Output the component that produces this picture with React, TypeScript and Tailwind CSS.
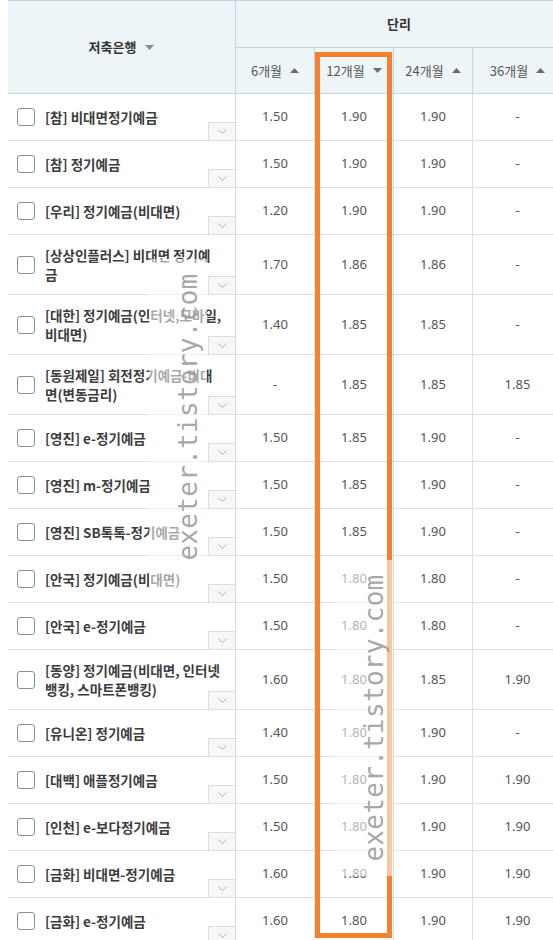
import React from "react";

type Row = {
  name: string[];
  rates: string[];
};

const rows: Row[] = [
  { name: ["[참] 비대면정기예금"], rates: ["1.50", "1.90", "1.90", "-"] },
  { name: ["[참] 정기예금"], rates: ["1.50", "1.90", "1.90", "-"] },
  { name: ["[우리] 정기예금(비대면)"], rates: ["1.20", "1.90", "1.90", "-"] },
  { name: ["[상상인플러스] 비대면 정기예", "금"], rates: ["1.70", "1.86", "1.86", "-"] },
  { name: ["[대한] 정기예금(인터넷,모바일,", "비대면)"], rates: ["1.40", "1.85", "1.85", "-"] },
  { name: ["[동원제일] 회전정기예금-비대", "면(변동금리)"], rates: ["-", "1.85", "1.85", "1.85"] },
  { name: ["[영진] e-정기예금"], rates: ["1.50", "1.85", "1.90", "-"] },
  { name: ["[영진] m-정기예금"], rates: ["1.50", "1.85", "1.90", "-"] },
  { name: ["[영진] SB톡톡-정기예금"], rates: ["1.50", "1.85", "1.90", "-"] },
  { name: ["[안국] 정기예금(비대면)"], rates: ["1.50", "1.80", "1.80", "-"] },
  { name: ["[안국] e-정기예금"], rates: ["1.50", "1.80", "1.80", "-"] },
  { name: ["[동양] 정기예금(비대면, 인터넷", "뱅킹, 스마트폰뱅킹)"], rates: ["1.60", "1.80", "1.85", "1.90"] },
  { name: ["[유니온] 정기예금"], rates: ["1.40", "1.80", "1.90", "-"] },
  { name: ["[대백] 애플정기예금"], rates: ["1.50", "1.80", "1.90", "1.90"] },
  { name: ["[인천] e-보다정기예금"], rates: ["1.50", "1.80", "1.90", "1.90"] },
  { name: ["[금화] 비대면-정기예금"], rates: ["1.60", "1.80", "1.90", "1.90"] },
  { name: ["[금화] e-정기예금"], rates: ["1.60", "1.80", "1.90", "1.90"] },
];

const periods = [
  { label: "6개월", dir: "up" },
  { label: "12개월", dir: "down" },
  { label: "24개월", dir: "up" },
  { label: "36개월", dir: "up" },
] as const;

const cols = "grid grid-cols-[228px_79px_79px_79px_89px]";

function SortArrow({ dir, color = "#6b6b6b" }: { dir: "up" | "down"; color?: string }) {
  return (
    <svg width="9" height="5" viewBox="0 0 9 5" className="shrink-0">
      {dir === "up" ? (
        <polygon points="0,5 9,5 4.5,0" fill={color} />
      ) : (
        <polygon points="0,0 9,0 4.5,5" fill={color} />
      )}
    </svg>
  );
}

// translucent band with the rotated blog watermark
function Watermark({ left, top, height, textTop }: { left: number; top: number; height: number; textTop: number }) {
  return (
    <div className="absolute w-[58px] bg-white/55 pointer-events-none" style={{ left, top, height }}>
      <div
        className="absolute left-[26px] w-[26px] h-[316px] flex items-center justify-center"
        style={{ top: textTop }}
      >
        <span className="-rotate-90 whitespace-nowrap text-[26px] leading-[26px] tracking-[0.3px] text-[#9c9c9c]/90 font-['DejaVu_Sans_Mono',monospace]">
          exeter.tistory.com
        </span>
      </div>
    </div>
  );
}

export default function App() {
  return (
    <div className="relative w-[553px] h-[940px] overflow-hidden bg-white font-['Noto_Sans_CJK_KR','Noto_Sans',sans-serif]">
      <div className="ml-[8px]">
        {/* header */}
        <div className={`${cols} grid-rows-[47px_46px] border-t border-[#c6d3e1] bg-[#eef5f8]`}>
          <div className="row-span-2 flex items-center justify-center gap-[9px] border-r border-b border-[#c6d3e1]">
            <span className="text-[13px] font-bold text-[#333]">저축은행</span>
            <SortArrow dir="down" color="#8a8a8a" />
          </div>
          <div className="col-span-4 flex items-center justify-center border-b border-[#c6d3e1]">
            <span className="text-[13px] font-bold text-[#333]">단리</span>
          </div>
          {periods.map((p, i) => (
            <div
              key={p.label}
              className={`flex items-center justify-center gap-[8px] border-b border-[#c6d3e1] ${
                i < 3 ? "border-r" : ""
              }`}
            >
              <span className="text-[13px] text-[#555]">{p.label}</span>
              <SortArrow dir={p.dir} />
            </div>
          ))}
        </div>

        {/* body */}
        {rows.map((row) => (
          <div
            key={row.name.join("")}
            className={`${cols} border-b border-[#dedede] ${row.name.length > 1 ? "h-[60px]" : "h-[47px]"}`}
          >
            <div className="flex items-center pl-[9px] border-r border-[#dcdcdc]">
              <div className="w-[18px] h-[18px] shrink-0 rounded-[3px] border border-[#8f8f8f] bg-white" />
              <div className="ml-[10px] flex-1 min-w-0 whitespace-nowrap text-[13.5px] leading-[19px] font-bold text-[#3d3d3d]">
                {row.name.map((line) => (
                  <div key={line}>{line}</div>
                ))}
              </div>
              <div className="self-end w-[27px] h-[18px] shrink-0 flex items-center justify-center border-t border-l border-[#dcdcdc] bg-[#f7f7f7]">
                <svg width="9" height="5" viewBox="0 0 9 5">
                  <polyline points="0.5,0.5 4.5,4.5 8.5,0.5" fill="none" stroke="#ec9aa3" strokeWidth="1" />
                </svg>
              </div>
            </div>
            {row.rates.map((r, i) => (
              <div
                key={i}
                className={`flex items-center justify-center text-[13px] text-[#555] font-['Noto_Sans',sans-serif] ${
                  i < 3 ? "border-r border-[#dedede]" : ""
                }`}
              >
                {r}
              </div>
            ))}
          </div>
        ))}
      </div>

      {/* highlight on 12개월 column */}
      <div className="absolute left-[315px] top-[52px] w-[77px] h-[886px] border-[5px] border-[#f5822a] pointer-events-none" />

      <Watermark left={149} top={259} height={330} textTop={0} />
      <Watermark left={335} top={560} height={316} textTop={0} />
    </div>
  );
}
